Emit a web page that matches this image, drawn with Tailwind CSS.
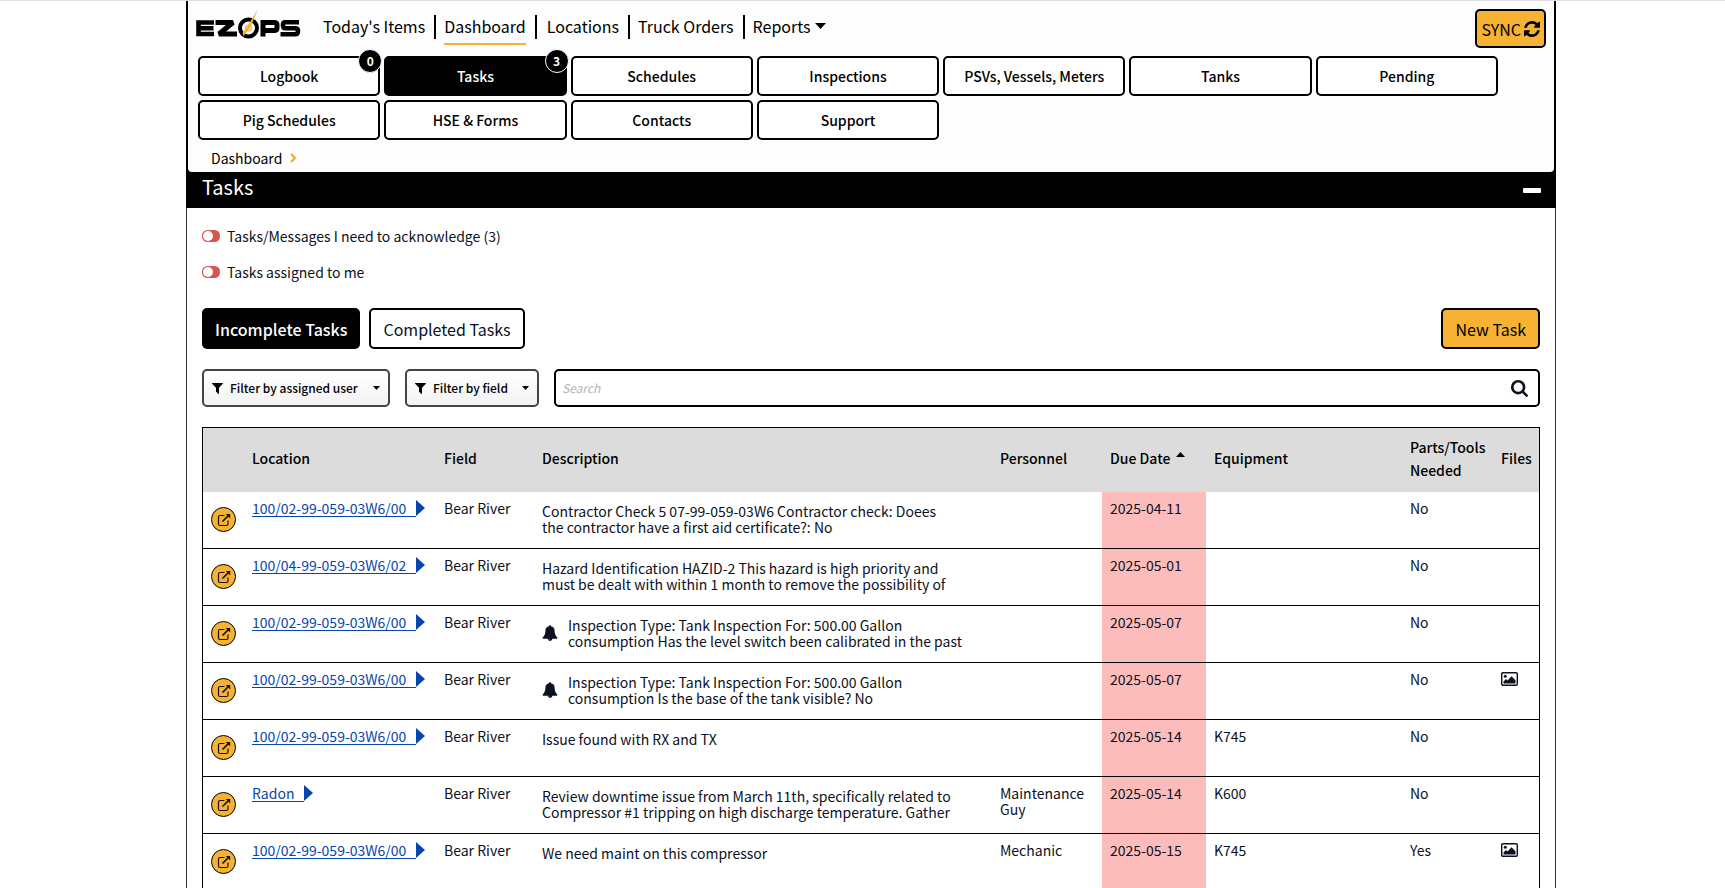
<!DOCTYPE html>
<html lang="en">
<head>
<meta charset="utf-8">
<title>EZOPS - Tasks</title>
<script src="https://cdn.jsdelivr.net/npm/@tailwindcss/browser@4"></script>
</head>
<body class="border-t border-[#e0e0e0] bg-white pl-[17px] font-['Noto_Sans_CJK_JP',sans-serif] text-[14px] leading-4 text-[#0b1121]">
<svg class="hidden" aria-hidden="true">
  <symbol id="bell" viewBox="0 0 1792 1792"><path d="M912 1696q0-16-16-16-59 0-101.5-42.5t-42.5-101.5q0-16-16-16t-16 16q0 73 51.5 124.5t124.5 51.5q16 0 16-16zm816-288q0 52-38 90t-90 38h-448q0 106-75 181t-181 75-181-75-75-181h-448q-52 0-90-38t-38-90q50-42 91-88t85-119.5 74.5-158.5 50-206 19.5-260q0-152 117-282.5t307-158.5q-8-19-8-39 0-40 28-68t68-28 68 28 28 68q0 20-8 39 190 28 307 158.5t117 282.5q0 139 19.5 260t50 206 74.5 158.5 85 119.5 91 88z"/></symbol>
  <symbol id="filter" viewBox="192 256 1408 1408"><path d="M1595 295q17 41-14 70l-493 493v742q0 42-39 59-13 5-25 5-27 0-45-19l-256-256q-19-19-19-45v-486l-493-493q-31-29-14-70 17-39 59-39h1280q42 0 59 39z"/></symbol>
  <symbol id="open" viewBox="0 0 14 14"><path d="M7.5 2.5H3Q1.5 2.500 1.5 4V11Q1.500 12.500 3 12.500H9.500Q11 12.500 11 11V7.500" fill="none" stroke="currentColor" stroke-width="1.200"/><path d="M5.500 8.500L11.500 2.500" stroke="currentColor" stroke-width="1.700"/><path d="M8.700 1H13.200V5.500Z"/></symbol>
  <symbol id="image" viewBox="0 0 17 14"><rect x="0.700" y="0.700" width="15.600" height="12.600" rx="1.200" fill="none" stroke="currentColor" stroke-width="1.400"/><circle cx="4.300" cy="4.300" r="1.500"/><path d="M2.500 11.500V9.500L5 7L6.500 8.500L10.500 4.300L14.500 8.300V11.500Z"/></symbol>
  <symbol id="toggle" viewBox="0 0 18 12"><rect width="18" height="12" rx="5.500" fill="#d9534f"/><circle cx="6" cy="6" r="5" fill="#fff"/></symbol>
</svg>
<div class="mx-auto max-w-[1370px]">
  <header class="bg-black px-0.5 text-black">
   <div class="rounded-b-[4px] bg-[#fdfdfd] px-2">
    <div class="flex items-start justify-between pt-2">
      <div class="flex items-start">
        <a href="#" aria-label="EZOPS home">
          <svg class="h-8 w-[106px]" viewBox="0 0 106 32">
            <g fill="none" stroke="#000" stroke-width="5">
              <path d="M18 13.500H2.500V25H18M2.500 19.250H17.500" stroke-width="4.600"/>
              <path d="M19.500 13.500H37L23 25H41" stroke-linejoin="bevel"/>
              <circle cx="52.500" cy="19" r="8.500" stroke-width="4"/>
              <circle cx="52.500" cy="19" r="3" stroke="#f6b232" stroke-width="1.200"/>
              <path d="M67 27.500V13.500H78Q81 13.500 81 16V19Q81 21.500 78 21.500H67"/>
              <path d="M103 13.200H89Q87 13.200 87 16Q87 19.250 89 19.250H99Q102 19.250 102 22Q102 25.200 99 25.200H84.500" stroke-width="4.600"/>
            </g>
            <path d="M62 0L54 19L47.500 27L46.500 24L51 18Z" fill="#f6b232"/>
          </svg>
        </a>
        <nav class="flex pl-[21px] pt-[6px] text-[16px] leading-[22px]">
          <a href="#" class="mr-[9px]">Today's Items</a>
          <a href="#" class="border-l-2 border-black pb-0.5 pl-2"><span class="relative block after:absolute after:inset-x-0 after:-bottom-2 after:h-0.5 after:bg-[#f6b232]">Dashboard</span></a>
          <a href="#" class="ml-[9px] border-l-2 border-black pb-0.5 pl-2.5">Locations</a>
          <a href="#" class="ml-[9px] border-l-2 border-black pb-0.5 pl-2">Truck Orders</a>
          <button class="ml-[9px] flex items-center gap-1 border-l-2 border-black pb-0.5 pl-2">Reports
            <svg class="h-1.5 w-[11px]" viewBox="0 0 11 6"><path d="M0 0H11L5.500 6Z"/></svg></button>
        </nav>
      </div>
      <button class="flex h-[39px] items-center gap-[3px] rounded-[5px] border-2 border-black bg-[#f6b232] px-1 text-[16px]">SYNC
        <svg class="size-4" viewBox="128 128 1536 1536"><path d="M1639 1056q0 5-1 7-64 268-268 434.500t-478 166.500q-146 0-282.500-55t-243.500-157l-129 129q-19 19-45 19t-45-19-19-45v-448q0-26 19-45t45-19h448q26 0 45 19t19 45-19 45l-137 137q71 66 161 102t187 36q134 0 250-65t186-179q11-17 53-117 8-23 30-23h192q13 0 22.500 9.500t9.500 22.500zm25-800v448q0 26-19 45t-45 19h-448q-26 0-45-19t-19-45 19-45l138-138q-148-137-349-137-134 0-250 65t-186 179q-11 17-53 117-8 23-30 23h-199q-13 0-22.500-9.500t-9.500-22.500v-7q65-268 270-434.500t480-166.500q146 0 284 55.500t245 156.500l130-129q19-19 45-19t45 19 19 45z"/></svg></button>
    </div>
    <div class="mt-2 grid max-w-[1302px] grid-cols-7 gap-1 pl-0.5 text-[14px] font-medium">
      <button class="relative h-10 rounded-[5px] border-2 border-black bg-white">Logbook<span class="absolute -right-1 -top-[9px] z-10 flex size-6 items-center justify-center rounded-full border border-white bg-black text-xs font-bold text-white">0</span></button>
      <button class="relative h-10 rounded-[5px] border-2 border-black bg-black text-white">Tasks<span class="absolute -right-1 -top-[9px] z-10 flex size-6 items-center justify-center rounded-full border border-white bg-black text-xs font-bold text-white">3</span></button>
      <button class="h-10 rounded-[5px] border-2 border-black bg-white">Schedules</button>
      <button class="h-10 rounded-[5px] border-2 border-black bg-white">Inspections</button>
      <button class="h-10 rounded-[5px] border-2 border-black bg-white">PSVs, Vessels, Meters</button>
      <button class="h-10 rounded-[5px] border-2 border-black bg-white">Tanks</button>
      <button class="h-10 rounded-[5px] border-2 border-black bg-white">Pending</button>
      <button class="h-10 rounded-[5px] border-2 border-black bg-white">Pig Schedules</button>
      <button class="h-10 rounded-[5px] border-2 border-black bg-white">HSE &amp; Forms</button>
      <button class="h-10 rounded-[5px] border-2 border-black bg-white">Contacts</button>
      <button class="h-10 rounded-[5px] border-2 border-black bg-white">Support</button>
    </div>
    <nav aria-label="Breadcrumb" class="flex h-8 items-center gap-2 pl-[15px] pt-1">
      <a href="#">Dashboard</a>
      <svg class="h-2.5 w-1.5" viewBox="0 0 6 10"><path d="M1 1L5 5L1 9" fill="none" stroke="#f6a821" stroke-width="2"/></svg>
    </nav>
   </div>
  </header>
  <main class="border-x border-[#333]">
    <div class="-mx-px flex h-9 items-center justify-between bg-black pl-4 pr-[15px] text-white">
      <h1 class="pb-1.5 text-[20px] leading-6">Tasks</h1>
      <button aria-label="Collapse" class="h-[5px] w-[18px] rounded-[1px] bg-white"></button>
    </div>
    <div class="px-[15px] pt-5">
      <button class="flex h-4 items-center gap-[7px]"><svg class="h-3 w-[18px]"><use href="#toggle"/></svg>Tasks/Messages I need to acknowledge (3)</button>
      <button class="mt-5 flex h-4 items-center gap-[7px]"><svg class="h-3 w-[18px]"><use href="#toggle"/></svg>Tasks assigned to me</button>
      <div class="mt-7 flex text-[16px]">
        <button class="h-[41px] rounded-[5px] border-2 border-black bg-black px-[11px] font-medium text-white">Incomplete Tasks</button>
        <button class="ml-[9px] h-[41px] rounded-[5px] border-2 border-black bg-white px-3">Completed Tasks</button>
        <button class="ml-auto h-[41px] rounded-[5px] border-2 border-black bg-[#f6b232] px-3 text-black">New Task</button>
      </div>
      <div class="mt-5 flex gap-[15px] text-[12px] font-medium text-black">
        <button class="flex h-[38px] w-[188px] items-center rounded-[5px] border-2 border-[#444] bg-linear-to-b from-white to-[#f3f3f3] px-2"><svg class="mr-[7px] size-[11px]"><use href="#filter"/></svg>Filter by assigned user<svg class="ml-auto h-1 w-[7px]" viewBox="0 0 7 4"><path d="M0 0H7L3.500 4Z"/></svg></button>
        <button class="flex h-[38px] w-[134px] items-center rounded-[5px] border-2 border-[#444] bg-linear-to-b from-white to-[#f3f3f3] px-2"><svg class="mr-[7px] size-[11px]"><use href="#filter"/></svg>Filter by field<svg class="ml-auto h-1 w-[7px]" viewBox="0 0 7 4"><path d="M0 0H7L3.500 4Z"/></svg></button>
        <div class="flex h-[38px] flex-1 items-center rounded-[5px] border-2 border-black pl-1.5 pr-2.5">
          <input type="text" aria-label="Search" placeholder="Search" class="min-w-0 flex-1 font-normal outline-none placeholder:italic placeholder:text-[#b5b5b5]">
          <button aria-label="Run search"><svg class="size-[17px] fill-[#0b1121]" viewBox="64 128 1664 1664"><path d="M1216 832q0-185-131.500-316.500t-316.500-131.500-316.500 131.500-131.500 316.500 131.500 316.500 316.500 131.500 316.500-131.500 131.500-316.500zm512 832q0 52-38 90t-90 38q-54 0-90-38l-343-342q-179 124-399 124-143 0-273.500-55.500t-225-150-150-225-55.500-273.500 55.500-273.500 150-225 225-150 273.500-55.500 273.500 55.500 225 150 150 225 55.500 273.500q0 220-124 399l343 343q37 37 37 90z"/></svg></button>
        </div>
      </div>
      <div class="mt-5 border border-black">
        <table class="w-full table-fixed border-separate border-spacing-0 text-left [&_tbody_td]:h-[57px] [&_tbody_td]:border-b [&_tbody_td]:border-black [&_td]:px-2 [&_td]:pt-2 [&_td]:align-top [&_th]:px-2 [&_th]:pb-[3px]">
          <colgroup><col class="w-[41px]"><col class="w-[192px]"><col class="w-[98px]"><col><col class="w-[110px]"><col class="w-[104px]"><col class="w-[196px]"><col class="w-[91px]"><col class="w-[46px]"></colgroup>
          <thead class="bg-[#dcdcdc] text-black">
            <tr class="h-16 leading-[23px] [&_th]:font-medium">
              <th aria-label="Open"></th><th>Location</th><th>Field</th><th>Description</th><th>Personnel</th>
              <th aria-sort="ascending"><span class="flex items-center gap-1.5 whitespace-nowrap">Due Date<svg class="mb-2 h-[5px] w-[9px]" viewBox="0 0 9 5"><path d="M0 5H9L4.500 0Z"/></svg></span></th>
              <th>Equipment</th><th>Parts/Tools Needed</th><th>Files</th>
            </tr>
          </thead>
          <tbody id="rows"></tbody>
        </table>
      </div>
    </div>
  </main>
</div>
<script>
const A = '100/02-99-059-03W6/00', B = '100/04-99-059-03W6/02';
const rows = [
  [A, 'Contractor Check 5 07-99-059-03W6 Contractor check: Doees<br>the contractor have a first aid certificate?: No', '', '2025-04-11', '', 'No'],
  [B, 'Hazard Identification HAZID-2 This hazard is high priority and<br>must be dealt with within 1 month to remove the possibility of', '', '2025-05-01', '', 'No'],
  [A, 'Inspection Type: Tank Inspection For: 500.00 Gallon<br>consumption Has the level switch been calibrated in the past', '', '2025-05-07', '', 'No', 1, 0],
  [A, 'Inspection Type: Tank Inspection For: 500.00 Gallon<br>consumption Is the base of the tank visible? No', '', '2025-05-07', '', 'No', 1, 1],
  [A, 'Issue found with RX and TX', '', '2025-05-14', 'K745', 'No'],
  ['Radon', 'Review downtime issue from March 11th, specifically related to<br>Compressor #1 tripping on high discharge temperature. Gather', 'Maintenance Guy', '2025-05-14', 'K600', 'No'],
  [A, 'We need maint on this compressor', 'Mechanic', '2025-05-15', 'K745', 'Yes', 0, 1]
];
document.getElementById('rows').innerHTML = rows.map(([loc, desc, who, due, eq, parts, bell, file]) => `<tr>
  <td><button aria-label="Open task" class="mt-[7px] flex size-[25px] items-center justify-center rounded-full border border-black bg-[#f6b232] text-[#1a1408]"><svg class="size-3.5 fill-current"><use href="#open"/></svg></button></td>
  <td><a href="#" class="inline-flex whitespace-nowrap text-[#0645ad] fill-[#0645ad]"><span class="border-b border-[#0645ad] pr-2.5">${loc}</span><svg class="h-4 w-[9px]" viewBox="0 0 9 16"><path d="M0 0L9 8L0 16Z"/></svg></a></td>
  <td>Bear River</td>
  <td><div class="mt-[3px] flex items-center gap-2.5 whitespace-nowrap">${bell ? '<svg class="size-4 shrink-0 fill-[#0b1121]"><use href="#bell"/></svg>' : ''}<span>${desc}</span></div></td>
  <td>${who}</td><td class="bg-[#fdbcbc]">${due}</td><td>${eq}</td><td>${parts}</td>
  <td>${file ? '<svg role="img" aria-label="Picture attached" class="mt-px h-[14px] w-[17px] fill-[#0b1121]"><use href="#image"/></svg>' : ''}</td></tr>`).join('');
</script>
</body>
</html>
